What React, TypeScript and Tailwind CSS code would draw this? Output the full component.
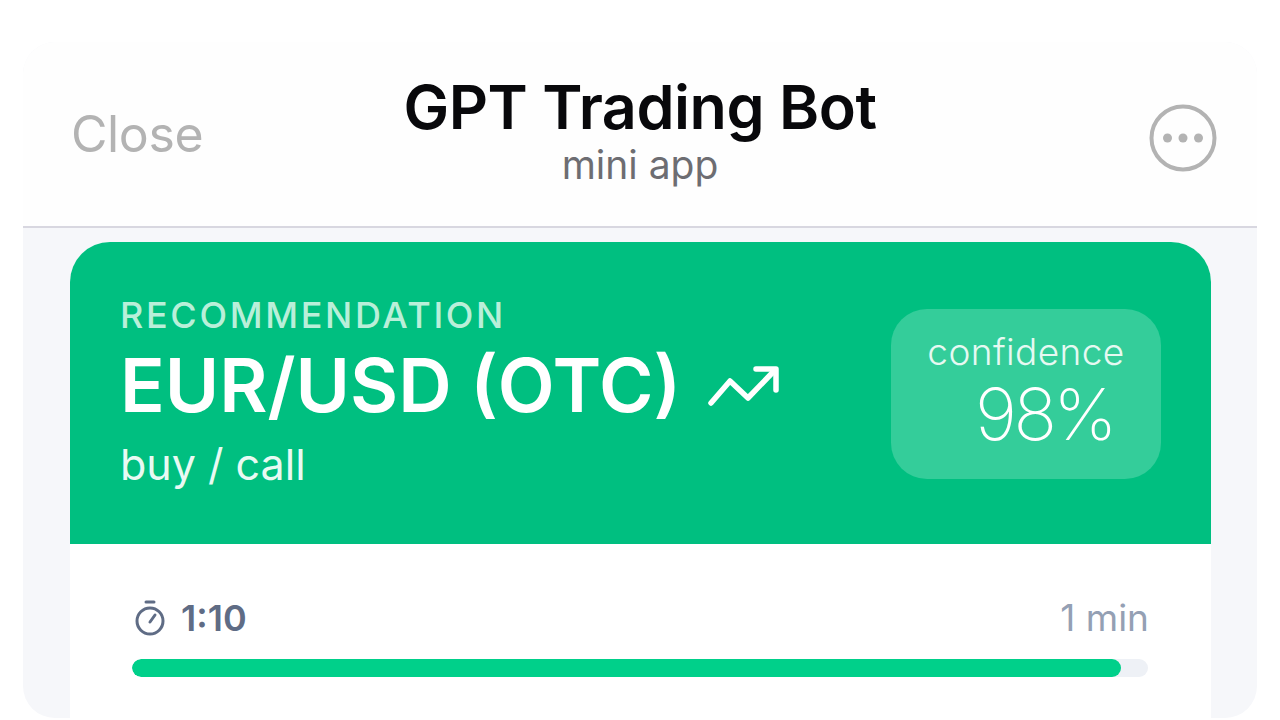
import React from "react";

export default function App() {
  return (
    <div className="w-[1280px] h-[720px] bg-white overflow-hidden pt-[42px] pl-[23px] font-['Inter',sans-serif]">
      <div className="w-[1234px] h-[676px] rounded-[32px] overflow-hidden bg-[#f6f7fa] flex flex-col">
        <header className="h-[186px] shrink-0 bg-[#fefefe] border-b-2 border-[#d8d7e0] flex items-start relative">
          <div className="w-full flex flex-col items-center pt-[31px]">
            <div className="text-[61px] leading-[68px] font-semibold text-[#08080b] tracking-[-0.45px]">GPT Trading Bot</div>
            <div className="text-[39px] leading-[48px] text-[#6d6d72]">mini app</div>
          </div>
          <div className="absolute left-[48px] top-[57px] text-[50px] leading-[70px] text-[#b3b3b3] tracking-[-0.4px]">Close</div>
          <svg className="absolute left-[1126px] top-[62px]" width="68" height="68" viewBox="0 0 68 68" fill="none">
            <circle cx="34" cy="34" r="31.5" stroke="#b3b3b3" strokeWidth="4" />
            <circle cx="18.5" cy="34" r="4.5" fill="#b3b3b3" />
            <circle cx="34" cy="34" r="4.5" fill="#b3b3b3" />
            <circle cx="49.5" cy="34" r="4.5" fill="#b3b3b3" />
          </svg>
        </header>
        <div className="pt-[14px] px-[47px] flex-1">
          <div className="w-[1141px] rounded-t-[40px] overflow-hidden h-[476px] bg-white">
            <section className="h-[302px] bg-[#00bf80] pl-[50px] pr-[50px] pt-[50px] flex justify-between items-start">
              <div className="flex flex-col text-white">
                <div className="text-[36px] leading-[46px] font-medium tracking-[2.65px] text-[#b9efd9]">RECOMMENDATION</div>
                <div className="flex items-center gap-[27px] h-[94px]">
                  <span className="text-[74px] leading-[94px] font-semibold">EUR/USD (OTC)</span>
                  <svg className="mt-[4px]" width="72" height="44" viewBox="0 0 72 44" fill="none" stroke="#ffffff" strokeWidth="5.5" strokeLinecap="round" strokeLinejoin="round">
                    <path d="M3 38 L22 16 L40 33 L66 6" />
                    <path d="M48 4 H68 V25" />
                  </svg>
                </div>
                <div className="text-[43px] leading-[58px] mt-[3px] text-[#e8faf3]">buy / call</div>
              </div>
              <div className="mt-[17px] w-[270px] h-[170px] rounded-[36px] bg-[#34cd9a] pt-[20px] flex flex-col items-center text-white">
                <div className="text-[37px] leading-[46px] font-light text-[#e6f9f2] tracking-[0.4px]">confidence</div>
                <div className="text-[72px] leading-[78px] font-extralight pl-[37px] tracking-[-3.5px]">98%</div>
              </div>
            </section>
            <section className="pl-[62px] pr-[63px] pt-[50px]">
              <div className="flex justify-between items-center h-[48px]">
                <div className="flex items-center gap-[16px] pl-[3px]">
                  <svg width="30" height="36" viewBox="0 0 30 36" fill="none" stroke="#5f6c85" strokeWidth="3" strokeLinecap="round">
                    <path d="M11 2 H19" />
                    <circle cx="15" cy="21" r="13" />
                    <path d="M15 22 L20 15" />
                  </svg>
                  <span className="text-[36px] leading-[48px] font-semibold text-[#5f6c85]">1:10</span>
                </div>
                <span className="text-[37px] leading-[48px] text-[#94a0b4] -mr-[1px]">1 min</span>
              </div>
              <div className="mt-[17px] h-[18px] rounded-full bg-[#eef1f6] overflow-hidden">
                <div className="h-full w-[97.3%] rounded-full bg-[#00d08a]" />
              </div>
            </section>
          </div>
        </div>
      </div>
    </div>
  );
}
